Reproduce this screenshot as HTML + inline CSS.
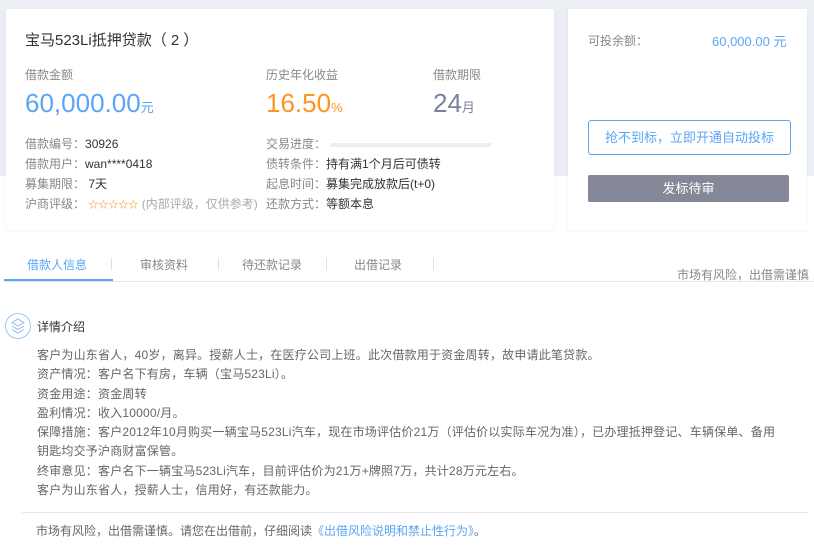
<!DOCTYPE html>
<html><head><meta charset="utf-8"><style>
*{margin:0;padding:0;box-sizing:border-box}
body{width:814px;height:550px;position:relative;background:#fff;font-family:"Liberation Sans","Noto Sans CJK SC",sans-serif;font-size:12px;color:#333;overflow:hidden}
.band{position:absolute;left:0;top:0;width:814px;height:176px;background:#eceef5}
.card{position:absolute;background:#fff;box-shadow:0 1px 3px rgba(0,0,0,.06)}
.a{position:absolute;white-space:nowrap}
.g{color:#888}
.d{color:#333}
</style></head><body>
<div class="band"></div>
<div class="card" style="left:6px;top:9px;width:548px;height:221px"></div>
<div class="card" style="left:568px;top:9px;width:239px;height:221px"></div>

<div class="a" style="left:25px;top:29px;font-size:15px;color:#333">宝马523Li抵押贷款（ 2 ）</div>
<div class="a g" style="left:25px;top:66px">借款金额</div>
<div class="a g" style="left:266px;top:66px">历史年化收益</div>
<div class="a g" style="left:433px;top:66px">借款期限</div>
<div class="a" style="left:25px;top:88px;font-size:26px;color:#5aa5f5">60,000.00<span style="font-size:13px">元</span></div>
<div class="a" style="left:266px;top:88px;font-size:26px;color:#ff9520">16.50<span style="font-size:13px">%</span></div>
<div class="a" style="left:433px;top:88px;font-size:26px;color:#7a819e">24<span style="font-size:13px">月</span></div>

<div class="a" style="left:25px;top:135px"><span class="g">借款编号：</span>30926</div>
<div class="a" style="left:25px;top:155px"><span class="g">借款用户：</span>wan****0418</div>
<div class="a" style="left:25px;top:175px"><span class="g">募集期限：</span> 7天</div>
<div class="a" style="left:25px;top:195px"><span class="g">沪商评级：</span> <span style="color:#ff9520;font-size:10px">☆☆☆☆☆</span> <span style="color:#aaa">(内部评级，仅供参考)</span></div>
<div class="a g" style="left:266px;top:135px">交易进度：</div>
<div style="position:absolute;left:330px;top:143px;width:161px;height:4px;background:#eee"></div>
<div class="a" style="left:266px;top:155px"><span class="g">债转条件：</span>持有满1个月后可债转</div>
<div class="a" style="left:266px;top:175px"><span class="g">起息时间：</span>募集完成放款后(t+0)</div>
<div class="a" style="left:266px;top:195px"><span class="g">还款方式：</span>等额本息</div>

<div class="a g" style="left:588px;top:32px">可投余额：</div>
<div class="a" style="left:712px;top:31px;font-size:13px;color:#5aa5f5">60,000.00 元</div>
<div style="position:absolute;left:588px;top:120px;width:203px;height:35px;border:1px solid #5aa5f5;border-radius:3px;color:#5aa5f5;text-align:center;line-height:33px;font-size:13px">抢不到标，立即开通自动投标</div>
<div style="position:absolute;left:588px;top:175px;width:201px;height:27px;background:#848899;border-radius:2px;color:#fff;text-align:center;line-height:27px;font-size:13px">发标待审</div>

<div style="position:absolute;left:4px;top:281px;width:810px;height:1px;background:#e6e6e6"></div>
<div style="position:absolute;left:4px;top:279px;width:109px;height:2px;background:#5aa5f5"></div>
<div class="a" style="left:27px;top:256px;color:#5aa5f5">借款人信息</div>
<div class="a" style="left:110px;top:256px;color:#ddd">|</div>
<div class="a g" style="left:140px;top:256px">审核资料</div>
<div class="a" style="left:217px;top:256px;color:#ddd">|</div>
<div class="a g" style="left:242px;top:256px">待还款记录</div>
<div class="a" style="left:325px;top:256px;color:#ddd">|</div>
<div class="a g" style="left:354px;top:256px">出借记录</div>
<div class="a" style="left:432px;top:256px;color:#ddd">|</div>
<div class="a g" style="left:677px;top:266px">市场有风险，出借需谨慎</div>

<svg style="position:absolute;left:4px;top:312px" width="28" height="28" viewBox="0 0 28 28"><circle cx="14" cy="14" r="12.5" fill="none" stroke="#9cc7f5" stroke-width="1"/><path d="M14 7l6 3.5-6 3.5-6-3.5z M8 14l6 3.5 6-3.5 M8 17.5l6 3.5 6-3.5" fill="none" stroke="#8bbcf2" stroke-width="1"/></svg>
<div class="a" style="left:37px;top:318px;color:#333">详情介绍</div>
<div style="position:absolute;left:37px;top:346px;line-height:19.3px;color:#666;letter-spacing:0.2px">
客户为山东省人，40岁，离异。授薪人士，在医疗公司上班。此次借款用于资金周转，故申请此笔贷款。<br>
资产情况：客户名下有房，车辆（宝马523Li）。<br>
资金用途：资金周转<br>
盈利情况：收入10000/月。<br>
保障措施：客户2012年10月购买一辆宝马523Li汽车，现在市场评估价21万（评估价以实际车况为准），已办理抵押登记、车辆保单、备用<br>
钥匙均交予沪商财富保管。<br>
终审意见：客户名下一辆宝马523Li汽车，目前评估价为21万+牌照7万，共计28万元左右。<br>
客户为山东省人，授薪人士，信用好，有还款能力。
</div>
<div style="position:absolute;left:22px;top:512px;width:786px;height:1px;background:#e6e8ee"></div>
<div class="a" style="left:36px;top:522px;color:#666">市场有风险，出借需谨慎。请您在出借前，仔细阅读<span style="color:#5aa5f5">《出借风险说明和禁止性行为》</span>。</div>
</body></html>
